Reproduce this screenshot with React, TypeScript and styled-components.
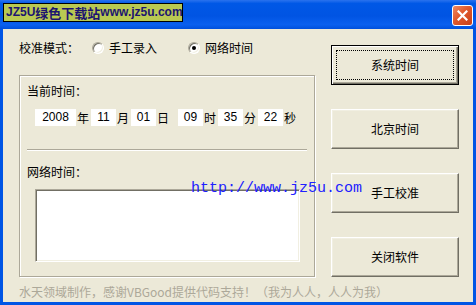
import React from 'react'
import { styled, createGlobalStyle } from 'styled-components'

const GlobalStyle = createGlobalStyle`
    html, body {
        margin: 0;
        padding: 0;
        background: #ece9d8;
    }
    body {
        font-family: "Noto Sans CJK SC", "Liberation Sans", sans-serif;
        font-size: 12px;
        color: #000;
    }
`

const dateParts = [
    { value: '2008', unit: '年', width: 41 },
    { value: '11', unit: '月', width: 25 },
    { value: '01', unit: '日', width: 25, wide: true },
    { value: '09', unit: '时', width: 25 },
    { value: '35', unit: '分', width: 25 },
    { value: '22', unit: '秒', width: 25 },
]

const buttons = ['系统时间', '北京时间', '手工校准', '关闭软件']

export default function App() {
    return (
        <>
            <GlobalStyle />
            <Frame>
                <TitleBar>
                    <Caption>
                        <Latin>JZ5U</Latin>
                        <Cjk>绿色下载站</Cjk>
                        <Latin>www.jz5u.com</Latin>
                    </Caption>
                    <CloseButton>
                        <svg width="11" height="11" viewBox="0 0 11 11">
                            <path d="M1.5 1.5 L9.5 9.5 M9.5 1.5 L1.5 9.5" stroke="#fff" strokeWidth="2.2" strokeLinecap="square" />
                        </svg>
                    </CloseButton>
                </TitleBar>
                <Client>
                    <Main>
                        <LeftColumn>
                            <ModeRow>
                                <span>校准模式：</span>
                                <RadioOption $offset={13}>
                                    <Radio />
                                    <span>手工录入</span>
                                </RadioOption>
                                <RadioOption $offset={31}>
                                    <Radio $checked />
                                    <span>网络时间</span>
                                </RadioOption>
                            </ModeRow>
                            <Group>
                                <GroupLabel $top={7}>当前时间：</GroupLabel>
                                <DateRow>
                                    {dateParts.map((p) => (
                                        <React.Fragment key={p.unit}>
                                            <Field $width={p.width}>{p.value}</Field>
                                            <Unit $wide={p.wide}>{p.unit}</Unit>
                                        </React.Fragment>
                                    ))}
                                </DateRow>
                                <Separator />
                                <GroupLabel $top={13}>网络时间：</GroupLabel>
                                <Output />
                            </Group>
                        </LeftColumn>
                        <ButtonColumn>
                            {buttons.map((b, i) => (
                                <Button key={b} $default={i === 0}>
                                    {i === 0 && <FocusRect />}
                                    {b}
                                </Button>
                            ))}
                        </ButtonColumn>
                    </Main>
                    <Footer>水天领域制作，感谢VBGood提供代码支持！（我为人人，人人为我）</Footer>
                </Client>
                <Watermark>http://www.jz5u.com</Watermark>
            </Frame>
        </>
    )
}

const Frame = styled.div`
    position: relative;
    width: 476px;
    height: 305px;
    display: flex;
    flex-direction: column;
    background: #0055e5;
    box-sizing: border-box;
`

const TitleBar = styled.div`
    height: 29px;
    flex-shrink: 0;
    display: flex;
    justify-content: space-between;
    align-items: flex-start;
    padding: 3px 3px 0 3px;
    box-sizing: border-box;
    background: linear-gradient(180deg, #2a72ee 0%, #0058e6 12%, #0054e3 55%, #0a60ef 85%, #0050dc 100%);
`

const Caption = styled.div`
    height: 19px;
    width: 180px;
    box-sizing: border-box;
    border: 1px solid #000;
    background: #b9c952;
    color: #1c1470;
    font-weight: bold;
    line-height: 17px;
    padding-left: 2px;
    white-space: nowrap;
    overflow: hidden;
    display: flex;
    align-items: center;
`

const Latin = styled.span`
    font-family: "Liberation Sans", sans-serif;
    font-size: 12px;
`

const Cjk = styled.span`
    font-family: "Noto Sans CJK SC", sans-serif;
    font-size: 13px;
`

const CloseButton = styled.div`
    width: 21px;
    height: 21px;
    margin-top: 2px;
    box-sizing: border-box;
    border: 1px solid #fff;
    border-radius: 3px;
    background: linear-gradient(135deg, #f08a62 0%, #e0582c 45%, #c8401a 100%);
    display: flex;
    align-items: center;
    justify-content: center;
`

const Client = styled.div`
    flex: 1;
    margin: 0 3px 3px 3px;
    background: #ece9d8;
    display: flex;
    flex-direction: column;
`

const Main = styled.div`
    height: 248px;
    display: flex;
`

const LeftColumn = styled.div`
    width: 296px;
    padding: 9px 0 0 16px;
    display: flex;
    flex-direction: column;
`

const ModeRow = styled.div`
    height: 20px;
    display: flex;
    align-items: center;
    line-height: 16px;
`

const RadioOption = styled.div<{ $offset: number }>`
    display: flex;
    align-items: center;
    gap: 5px;
    margin-left: ${(props) => props.$offset}px;
`

const Radio = styled.div<{ $checked?: boolean }>`
    position: relative;
    width: 12px;
    height: 12px;
    box-sizing: border-box;
    border-radius: 50%;
    background: #fff;
    border: 1px solid;
    border-color: #aca899 #fff #fff #aca899;
    box-shadow: inset 1px 1px 0 #716f64, inset -1px -1px 0 #f1efe2;
    &::after {
        content: '';
        display: ${(props) => (props.$checked ? 'block' : 'none')};
        position: absolute;
        left: 3px;
        top: 3px;
        width: 4px;
        height: 4px;
        border-radius: 50%;
        background: #000;
    }
`

const Group = styled.div`
    margin-top: 17px;
    height: 202px;
    box-sizing: border-box;
    border: 1px solid #aca899;
    box-shadow: inset 1px 1px 0 #fff, 1px 1px 0 #fff;
    padding: 0 7px;
    display: flex;
    flex-direction: column;
`

const GroupLabel = styled.div<{ $top: number }>`
    margin-top: ${(props) => props.$top}px;
    line-height: 16px;
`

const DateRow = styled.div`
    margin-top: 10px;
    padding-left: 8px;
    height: 17px;
    display: flex;
    align-items: center;
`

const Field = styled.div<{ $width: number }>`
    width: ${(props) => props.$width}px;
    height: 17px;
    background: #fff;
    text-align: center;
    line-height: 17px;
    font-family: "Liberation Sans", sans-serif;
    font-size: 12px;
`

const Unit = styled.div<{ $wide?: boolean }>`
    width: 12px;
    margin: 0 ${(props) => (props.$wide ? 9 : 2)}px 0 1px;
    line-height: 17px;
`

const Separator = styled.div`
    margin-top: 23px;
    border-top: 1px solid #aca899;
    border-bottom: 1px solid #fff;
`

const Output = styled.div`
    margin: 9px 0 0 8px;
    width: 265px;
    height: 73px;
    box-sizing: border-box;
    background: #fff;
    border: 1px solid;
    border-color: #aca899 #fff #fff #aca899;
    box-shadow: inset 1px 1px 0 #716f64, inset -1px -1px 0 #f1efe2;
`

const ButtonColumn = styled.div`
    margin-left: 16px;
    padding-top: 16px;
    display: flex;
    flex-direction: column;
    gap: 24px;
`

const Button = styled.div<{ $default?: boolean }>`
    position: relative;
    width: 128px;
    height: 40px;
    box-sizing: border-box;
    display: flex;
    align-items: center;
    justify-content: center;
    background: #ece9d8;
    border: 1px solid;
    border-color: ${(props) => (props.$default ? '#000' : '#fff #716f64 #716f64 #fff')};
    box-shadow: ${(props) =>
        props.$default
            ? 'inset 1px 1px 0 #fff, inset -1px -1px 0 #716f64, inset -2px -2px 0 #aca899'
            : 'inset -1px -1px 0 #aca899, inset 1px 1px 0 #f1efe2'};
    line-height: 16px;
`

const FocusRect = styled.div`
    position: absolute;
    inset: 4px;
    border: 1px dotted #000;
`

const Footer = styled.div`
    padding: 7px 0 0 16px;
    line-height: 16px;
    color: #aca899;
    white-space: nowrap;
`

const Watermark = styled.div`
    position: absolute;
    left: 191px;
    top: 180px;
    font-family: "Liberation Mono", monospace;
    font-size: 15px;
    line-height: 17px;
    color: #2020ff;
    white-space: nowrap;
`
